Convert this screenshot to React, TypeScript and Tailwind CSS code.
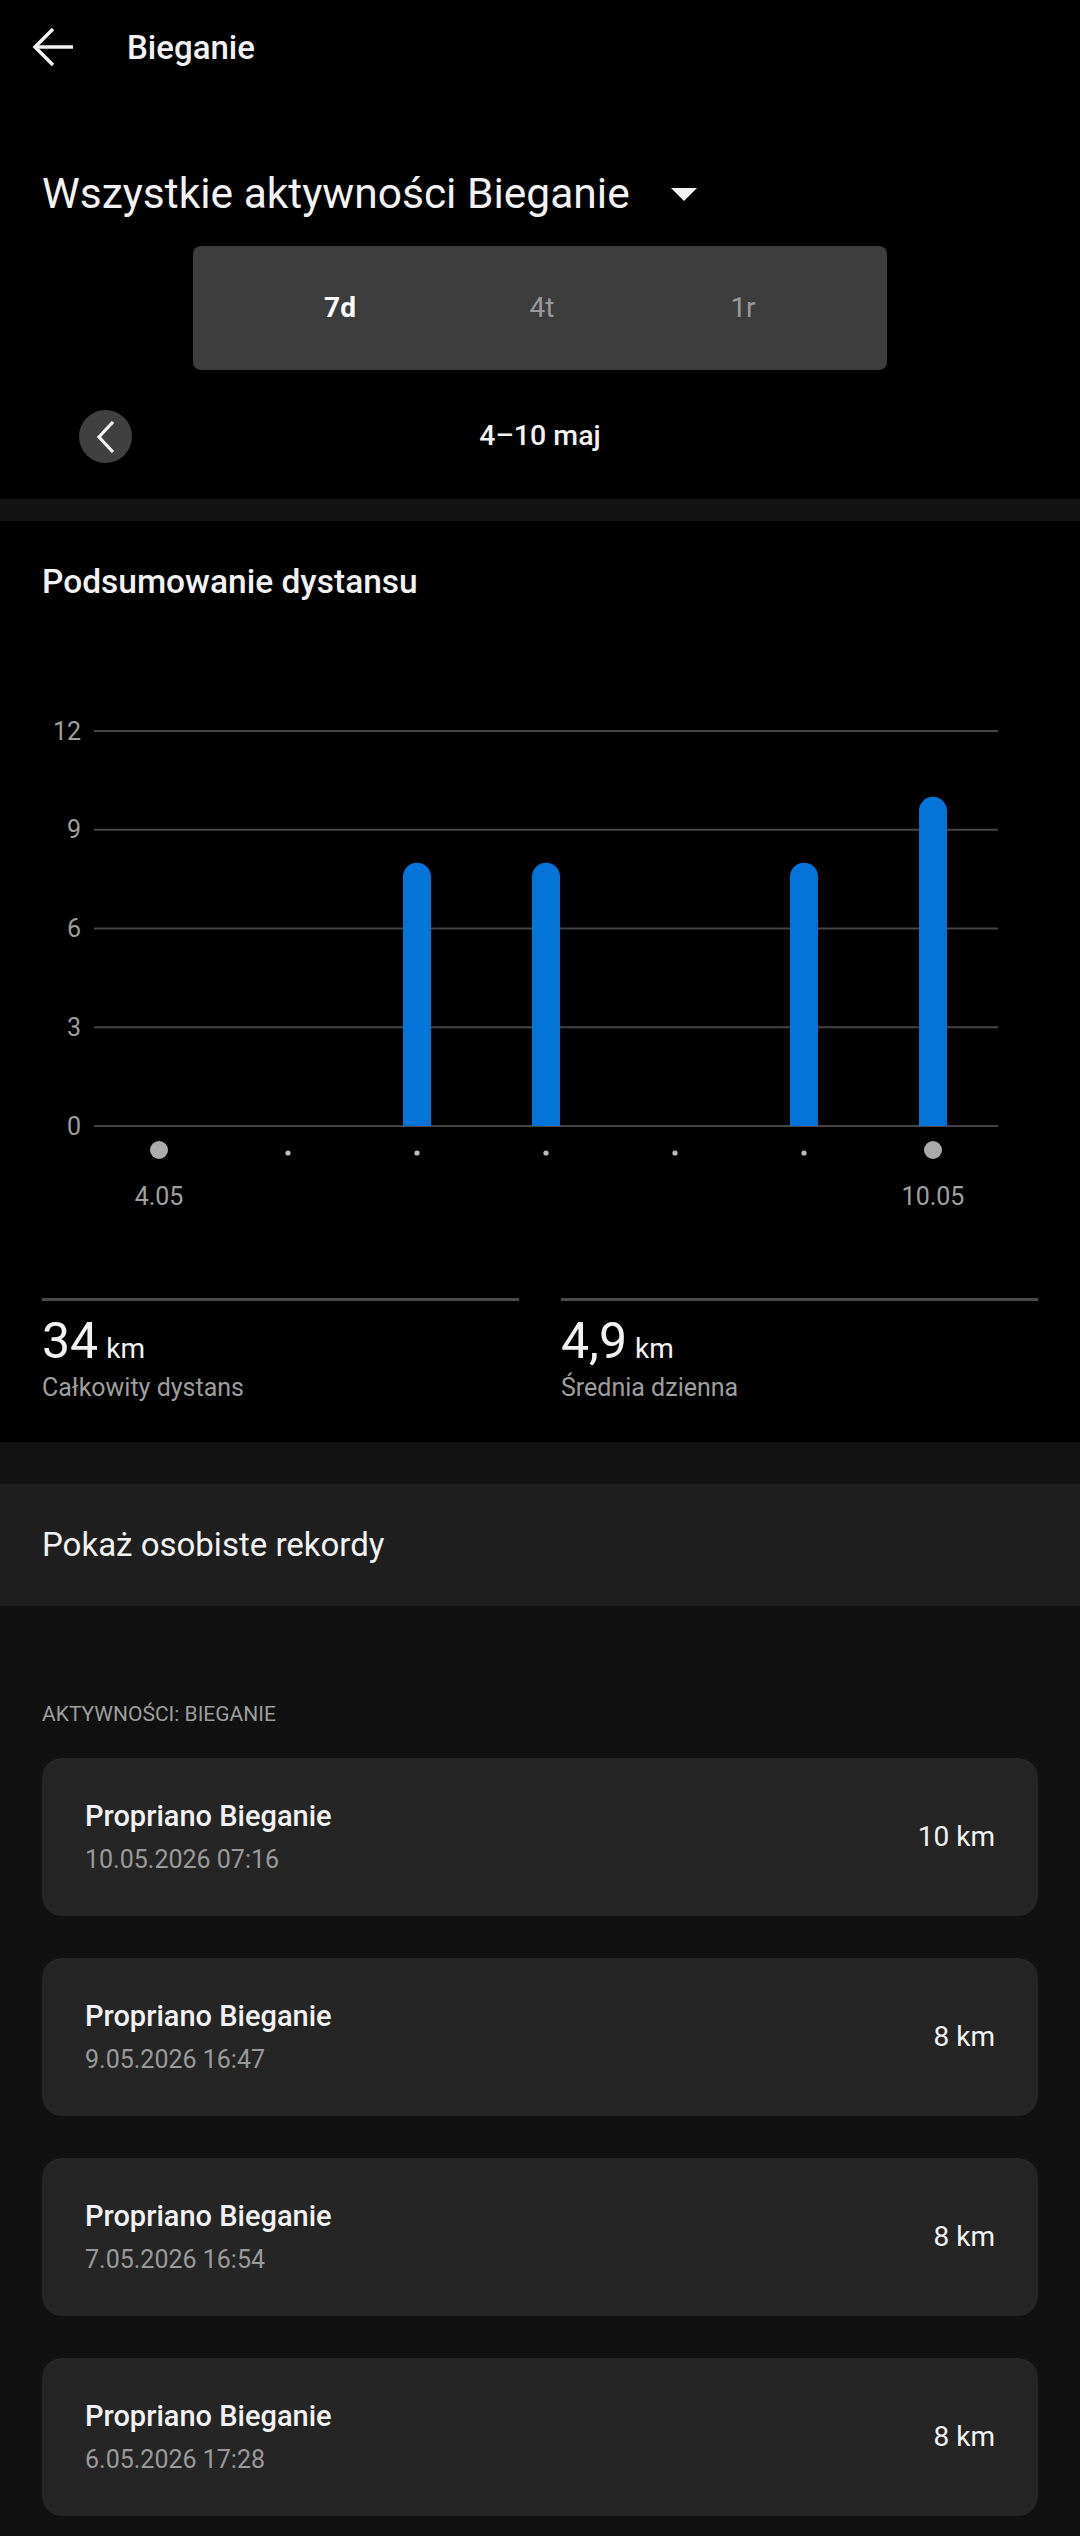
import React from "react";

const days = [
	{ label: "4.05", value: 0, big: true },
	{ label: "", value: 0, big: false },
	{ label: "", value: 8, big: false },
	{ label: "", value: 8, big: false },
	{ label: "", value: 0, big: false },
	{ label: "", value: 8, big: false },
	{ label: "10.05", value: 10, big: true },
];

const activities = [
	{ title: "Propriano Bieganie", date: "10.05.2026 07:16", km: "10 km" },
	{ title: "Propriano Bieganie", date: "9.05.2026 16:47", km: "8 km" },
	{ title: "Propriano Bieganie", date: "7.05.2026 16:54", km: "8 km" },
	{ title: "Propriano Bieganie", date: "6.05.2026 17:28", km: "8 km" },
];

export default function App() {
	return (
		<div className="w-[1080px] min-h-[2536px] bg-[#111111] font-['Roboto',sans-serif] text-[#f2f2f2]">
			{/* Top: header, filter, range */}
			<section className="bg-black pb-[36px]">
				<header className="h-[94px] flex items-center pl-[32px]">
					<svg width="42" height="42" viewBox="0 0 42 42" fill="none" stroke="#f2f2f2" strokeWidth="3.5" strokeLinecap="butt">
						<path d="M41 21H3" />
						<path d="M21 3L3 21L21 39" />
					</svg>
					<span className="ml-[53px] text-[33px] font-medium leading-none">Bieganie</span>
				</header>

				<div className="mt-[79px] px-[42px] flex items-center h-[42px]">
					<h1 className="text-[42.5px] leading-[42px] font-normal">Wszystkie aktywności Bieganie</h1>
					<svg className="ml-[41px] mt-[2px]" width="26" height="14" viewBox="0 0 26 14">
						<path d="M0 0H26L13 13Z" fill="#f2f2f2" />
					</svg>
				</div>

				<div className="mt-[31px] mx-auto w-[694px] h-[124px] rounded-[8px] bg-[#3d3d3d] flex items-center justify-center">
					<span className="w-[200px] text-center text-[28px] font-bold text-white">7d</span>
					<span className="w-[200px] text-center text-[28px] text-[#9a9a9a] pl-[4px]">4t</span>
					<span className="w-[200px] text-center text-[28px] text-[#9a9a9a] pl-[6px]">1r</span>
				</div>

				<div className="mt-[40px] grid grid-cols-[1fr_auto_1fr] items-center h-[53px]">
					<div className="pl-[79px]">
						<button className="w-[53px] h-[53px] rounded-full bg-[#404040] flex items-center justify-center">
							<svg width="20" height="32" viewBox="0 0 20 32" fill="none" stroke="#f2f2f2" strokeWidth="3.2">
								<path d="M17 1L3 16L17 31" />
							</svg>
						</button>
					</div>
					<span className="text-[28.5px] font-medium">4–10 maj</span>
					<div />
				</div>
			</section>

			<div className="h-[22px] bg-[#121212]" />

			{/* Distance summary */}
			<section className="bg-black pt-[41px] pb-[42px]">
				<h2 className="px-[42px] text-[33.5px] leading-[40px] font-medium">Podsumowanie dystansu</h2>
				<DistanceChart />

				<div className="mt-[56px] px-[42px] grid grid-cols-2 gap-[42px]">
					<Stat value="34" label="Całkowity dystans" />
					<Stat value="4,9" label="Średnia dzienna" />
				</div>
			</section>

			<div className="h-[42px] bg-[#121212]" />

			<div className="h-[122px] bg-[#1f1f1f] flex items-center px-[42px]">
				<span className="text-[33px]">Pokaż osobiste rekordy</span>
			</div>

			{/* Activity list */}
			<section className="pt-[97px] pb-[20px] px-[42px]">
				<p className="text-[21px] leading-[22px] text-[#9e9e9e] uppercase">Aktywności: Bieganie</p>
				<div className="mt-[33px] flex flex-col gap-[42px]">
					{activities.map((a, i) => (
						<ActivityCard key={i} {...a} />
					))}
				</div>
			</section>
		</div>
	);
}

function DistanceChart() {
	const gridTop = 129;
	const gridBottom = 524;
	const unit = (gridBottom - gridTop) / 12;
	const ticks = [12, 9, 6, 3, 0];
	return (
		<svg width="1080" height="640" viewBox="0 0 1080 640" className="block">
			{ticks.map((t) => {
				const y = gridBottom - t * unit;
				return (
					<g key={t}>
						<line x1="94" x2="998" y1={y} y2={y} stroke="#454545" strokeWidth="2" />
						<text x="81" y={y} textAnchor="end" dominantBaseline="central" fontSize="25" fill="#9e9e9e">
							{t}
						</text>
					</g>
				);
			})}
			{days.map((d, i) => {
				const cx = 159 + i * 129;
				const top = gridBottom - d.value * unit;
				return (
					<g key={i}>
						{d.value > 0 && (
							<path
								d={`M${cx - 14} ${gridBottom} V${top + 14} A14 14 0 0 1 ${cx + 14} ${top + 14} V${gridBottom} Z`}
								fill="#0574d9"
							/>
						)}
						{d.big ? (
							<circle cx={cx} cy="548" r="9" fill="#ababab" />
						) : (
							<circle cx={cx} cy="551" r="2.6" fill="#bdbdbd" />
						)}
						{d.label && (
							<text x={cx} y="594" textAnchor="middle" dominantBaseline="central" fontSize="25" fill="#a0a0a0">
								{d.label}
							</text>
						)}
					</g>
				);
			})}
		</svg>
	);
}

function Stat({ value, label }: { value: string; label: string }) {
	return (
		<div className="border-t-[3px] border-[#4a4a4a] pt-[15px]">
			<div className="flex items-baseline h-[50px]">
				<span className="text-[50px] leading-[50px]">{value}</span>
				<span className="ml-[8px] text-[28px] leading-[28px]">km</span>
			</div>
			<p className="mt-[9px] text-[25px] leading-[25px] text-[#9e9e9e]">{label}</p>
		</div>
	);
}

function ActivityCard({ title, date, km }: { title: string; date: string; km: string }) {
	return (
		<div className="h-[158px] rounded-[20px] bg-[#252525] px-[43px] flex items-center justify-between">
			<div className="flex flex-col">
				<span className="text-[29px] leading-[29px] font-medium text-[#f2f2f2]">{title}</span>
				<span className="mt-[16px] text-[25px] leading-[25px] text-[#9a9a9a]">{date}</span>
			</div>
			<span className="text-[28px] text-[#f2f2f2]">{km}</span>
		</div>
	);
}
